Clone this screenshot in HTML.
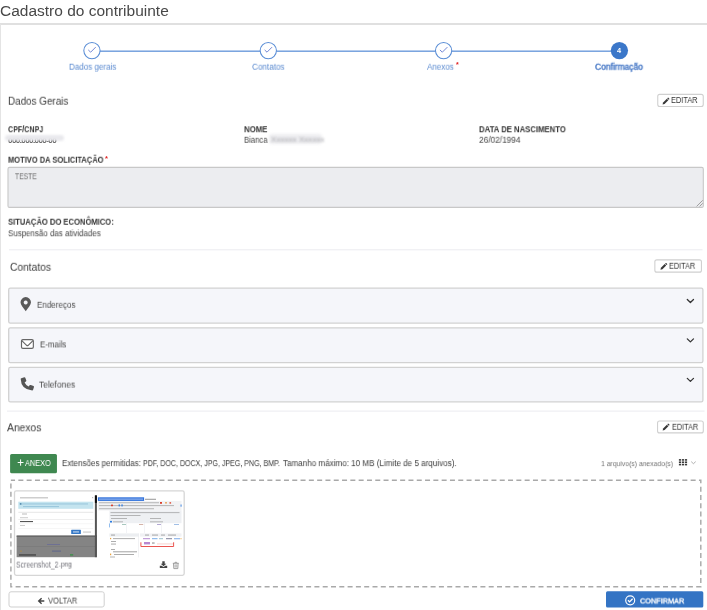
<!DOCTYPE html>
<html lang="pt-BR"><head><meta charset="utf-8"><title>Cadastro do contribuinte</title>
<style>
html,body{margin:0;padding:0;background:#fff}
body{position:relative;width:707px;height:610px;overflow:hidden;font-family:"Liberation Sans",sans-serif}
.t{position:absolute;white-space:pre;display:block;transform-origin:0 0;will-change:transform}
.a{position:absolute;box-sizing:border-box}
svg{position:absolute;overflow:visible}
.card-top{left:0;top:23px;width:707px;height:2px;background:#e0e0e0}
.card-left{left:0;top:24px;width:1px;height:586px;background:#e4e4e4}
.stepline{left:92px;top:50.6px;width:527px;height:1px;background:#5b8ed6}
.sc{width:17.4px;height:17.4px;border-radius:50%;border:1px solid #5b8ed6;background:#fff;top:41.9px}
.sc4{background:#3b77c9;border-color:#3b77c9}
.btn{border:1px solid #cfcfcf;border-radius:2px;background:#fff}
.sep{height:1px;background:#ececf0}
.panel{left:8.2px;width:695.2px;height:35px;border:1px solid #cdcdcd;border-radius:2px;background:#f5f6fa}
.ta{left:7.5px;top:167px;width:696.3px;height:40.8px;border:1px solid #c6c6c6;border-radius:2px;background:#ecedf0}
#s4{-webkit-text-stroke:0.3px #3a6fc2}
#bC{-webkit-text-stroke:0.35px #fff}

#title{left:-0.08px;top:2.20px;font:400 15.2px/1 "Liberation Sans", sans-serif;transform:translate3d(0,0.60px,0) scaleX(1.0198);color:#484848}
#s1{left:68.81px;top:62.00px;font:400 8.6px/1 "Liberation Sans", sans-serif;transform:translate3d(0,0.70px,0) scaleX(0.9355);color:#5a8ad0}
#s2{left:251.61px;top:62.00px;font:400 8.6px/1 "Liberation Sans", sans-serif;transform:translate3d(0,0.70px,0) scaleX(0.9467);color:#5a8ad0}
#s3{left:426.51px;top:62.00px;font:400 8.6px/1 "Liberation Sans", sans-serif;transform:translate3d(0,0.70px,0) scaleX(0.9338);color:#5a8ad0}
#s4{left:595.31px;top:62.00px;font:400 8.6px/1 "Liberation Sans", sans-serif;transform:translate3d(0,0.70px,0) scaleX(0.9827);color:#3a6fc2}
#h1{left:8.02px;top:94.95px;font:400 10.7px/1 "Liberation Sans", sans-serif;transform:translate3d(0,0.70px,0) scaleX(0.9238);color:#3a3a3a}
#l1{left:8.12px;top:125.05px;font:700 8.5px/1 "Liberation Sans", sans-serif;transform:translate3d(0,0.20px,0) scaleX(0.8387);color:#333}
#l2{left:244.02px;top:125.05px;font:700 8.5px/1 "Liberation Sans", sans-serif;transform:translate3d(0,0.20px,0) scaleX(0.9202);color:#333}
#l3{left:478.82px;top:125.05px;font:700 8.5px/1 "Liberation Sans", sans-serif;transform:translate3d(0,0.20px,0) scaleX(0.9081);color:#333}
#v2{left:244.02px;top:135.05px;font:400 8.5px/1 "Liberation Sans", sans-serif;transform:translate3d(0,0.80px,0) scaleX(0.9063);color:#444}
#v3{left:478.82px;top:135.05px;font:400 8.5px/1 "Liberation Sans", sans-serif;transform:translate3d(0,0.80px,0) scaleX(0.9769);color:#444}
#l4{left:7.62px;top:155.05px;font:700 8.5px/1 "Liberation Sans", sans-serif;transform:translate3d(0,0.70px,0) scaleX(0.8828);color:#333}
#ta{left:14.92px;top:172.05px;font:400 8.5px/1 "Liberation Sans", sans-serif;transform:translate3d(0,0.20px,0) scaleX(0.7942);color:#707070}
#l5{left:7.62px;top:217.05px;font:700 8.5px/1 "Liberation Sans", sans-serif;transform:translate3d(0,0.70px,0) scaleX(0.8958);color:#333}
#v5{left:7.62px;top:229.05px;font:400 8.5px/1 "Liberation Sans", sans-serif;transform:translate3d(0,0.20px,0) scaleX(0.9347);color:#444}
#h2{left:10.02px;top:260.95px;font:400 10.7px/1 "Liberation Sans", sans-serif;transform:translate3d(0,0.80px,0) scaleX(0.9575);color:#3a3a3a}
#a1{left:36.52px;top:300.05px;font:400 8.5px/1 "Liberation Sans", sans-serif;transform:translate3d(0,0.80px,0) scaleX(0.9440);color:#484848}
#a2{left:39.62px;top:340.05px;font:400 8.5px/1 "Liberation Sans", sans-serif;transform:translate3d(0,0.40px,0) scaleX(0.9267);color:#484848}
#a3{left:39.32px;top:380.05px;font:400 8.5px/1 "Liberation Sans", sans-serif;transform:translate3d(0,0.60px,0) scaleX(0.9911);color:#484848}
#h3{left:6.92px;top:421.95px;font:400 10.7px/1 "Liberation Sans", sans-serif;transform:translate3d(0,0.30px,0) scaleX(0.9665);color:#3a3a3a}
#bA{left:24.61px;top:459.00px;font:400 8.6px/1 "Liberation Sans", sans-serif;transform:translate3d(0,0.00px,0) scaleX(0.8531);color:#fff}
#ext{left:61.52px;top:459.05px;font:400 8.5px/1 "Liberation Sans", sans-serif;transform:translate3d(0,0.10px,0) scaleX(0.9431);color:#3a3a3a}
#ext2{left:143.22px;top:459.05px;font:400 8.5px/1 "Liberation Sans", sans-serif;transform:translate3d(0,0.10px,0) scaleX(0.8311);color:#3a3a3a}
#ext3{left:283.22px;top:459.05px;font:400 8.5px/1 "Liberation Sans", sans-serif;transform:translate3d(0,0.10px,0) scaleX(0.9493);color:#3a3a3a}
#cnt{left:601.04px;top:459.80px;font:400 8.0px/1 "Liberation Sans", sans-serif;transform:translate3d(0,0.10px,0) scaleX(0.8525);color:#747474}
#fn1{left:16.33px;top:560.15px;font:400 8.3px/1 "Liberation Sans", sans-serif;transform:translate3d(0,0.60px,0) scaleX(0.8290);color:#77777f}
#fn2{left:59.09px;top:561.40px;font:400 6.8px/1 "Liberation Sans", sans-serif;transform:translate3d(0,0.60px,0) scaleX(0.9530);color:#606068}
#bV{left:47.93px;top:596.15px;font:400 8.3px/1 "Liberation Sans", sans-serif;transform:translate3d(0,0.60px,0) scaleX(0.9149);color:#444}
#bC{left:640.14px;top:596.80px;font:400 8.0px/1 "Liberation Sans", sans-serif;transform:translate3d(0,0.40px,0) scaleX(0.9126);color:#fff}
#e1{left:671.13px;top:96.15px;font:400 8.3px/1 "Liberation Sans", sans-serif;transform:translate3d(0,0.00px,0) scaleX(0.8938);color:#333}
#e2{left:669.33px;top:261.15px;font:400 8.3px/1 "Liberation Sans", sans-serif;transform:translate3d(0,0.80px,0) scaleX(0.8804);color:#333}
#e3{left:671.53px;top:422.15px;font:400 8.3px/1 "Liberation Sans", sans-serif;transform:translate3d(0,0.80px,0) scaleX(0.8804);color:#333}
</style></head><body>
<div class="a card-top"></div>
<div class="a card-left"></div>
<svg style="left:0;top:0" width="707" height="610" viewBox="0 0 707 610">
<rect x="92" y="50.55" width="527" height="1.25" fill="#5b8fd8"/>
<circle cx="91.95" cy="50.55" r="8.15" fill="#fff" stroke="#5b8ed6" stroke-width="1.05"/>
<path d="M88.55 50.2 L90.65 52.2 L95.45 47.4" fill="none" stroke="#6a7fd2" stroke-width="0.95" stroke-linecap="round" stroke-linejoin="round"/>
<circle cx="268.3" cy="50.55" r="8.15" fill="#fff" stroke="#5b8ed6" stroke-width="1.05"/>
<path d="M264.90 50.2 L267.00 52.2 L271.80 47.4" fill="none" stroke="#6a7fd2" stroke-width="0.95" stroke-linecap="round" stroke-linejoin="round"/>
<circle cx="443.6" cy="50.55" r="8.15" fill="#fff" stroke="#5b8ed6" stroke-width="1.05"/>
<path d="M440.20 50.2 L442.30 52.2 L447.10 47.4" fill="none" stroke="#6a7fd2" stroke-width="0.95" stroke-linecap="round" stroke-linejoin="round"/>
<circle cx="619.4" cy="50.55" r="8.65" fill="#3b77c9"/>
</svg>
<span class="t" style="left:617.2px;top:46.6px;font:700 7.4px/1 'Liberation Sans',sans-serif;color:#fff">4</span>
<span class="t" style="left:455.5px;top:61.2px;font:700 7px/1 'Liberation Sans',sans-serif;color:#e02020">*</span>
<span class="t" style="left:105px;top:155.2px;font:700 7.5px/1 'Liberation Sans',sans-serif;color:#e02020">*</span>

<!-- boxes -->
<svg style="left:0;top:0" width="707" height="610" viewBox="0 0 707 610">
<rect x="657.75" y="94.35" width="45.50" height="12.20" rx="2" fill="#fff" stroke="#d0d0d0" stroke-width="1.1"/>
<rect x="654.85" y="259.85" width="46.60" height="12.30" rx="2" fill="#fff" stroke="#d0d0d0" stroke-width="1.1"/>
<rect x="657.55" y="420.95" width="45.75" height="11.95" rx="2" fill="#fff" stroke="#d0d0d0" stroke-width="1.1"/>
<rect x="8.00" y="167.40" width="695.30" height="40.00" rx="1.5" fill="#ecedf0" stroke="#c8c8c8" stroke-width="1.1"/>
<rect x="9.00" y="249.30" width="693.50" height="1.00" rx="0" fill="#ececf0"/>
<rect x="7.00" y="410.60" width="697.50" height="1.00" rx="0" fill="#ececf0"/>
<rect x="8.70" y="288.10" width="694.20" height="35.00" rx="1.6" fill="#f5f6fa" stroke="#d2d2d2" stroke-width="1.3"/>
<rect x="8.70" y="327.80" width="694.20" height="34.90" rx="1.6" fill="#f5f6fa" stroke="#d2d2d2" stroke-width="1.3"/>
<rect x="8.70" y="367.40" width="694.20" height="34.40" rx="1.6" fill="#f5f6fa" stroke="#d2d2d2" stroke-width="1.3"/>
<rect x="10.10" y="454.10" width="46.85" height="19.25" rx="1.5" fill="#3f8850"/>
<rect x="10.9" y="480.2" width="689.9" height="106.45" fill="none" stroke="#a9a9a9" stroke-width="1.45" stroke-dasharray="5 3.3" stroke-dashoffset="0.85"/>
<rect x="14.50" y="490.95" width="169.70" height="84.40" rx="1.8" fill="#fff" stroke="#d6d6d6" stroke-width="1.3"/>
<rect x="9.00" y="591.80" width="95.20" height="15.20" rx="2" fill="#fff" stroke="#cfcfcf" stroke-width="1.0"/>
<rect x="606.00" y="591.20" width="97.30" height="16.30" rx="1.5" fill="#3474c4"/>
</svg>
<!-- icons -->
<svg style="left:0;top:0" width="707" height="610" viewBox="0 0 707 610">
 <!-- pencils -->
 <g id="pen1" fill="#383838" transform="translate(665.75,101.3) rotate(-45)">
  <path d="M-4.5 0 L-2.7 -1.05 H2.6 V1.05 H-2.7 Z"/>
  <rect x="3.1" y="-1.05" width="1.3" height="2.1" rx="0.4"/>
 </g>
 <use href="#pen1" transform="translate(-2.15,165.3)"/>
 <use href="#pen1" transform="translate(0.05,325.95)"/>
 <path d="M696.6 206.4 L702.7 200.3 M699.6 206.4 L702.7 203.3" stroke="#8c8c8c" stroke-width="0.8" fill="none"/>
 <!-- map marker -->
 <path fill="#5a5a5a" fill-rule="evenodd" d="M25.75 297.1 a5.25 5.25 0 0 1 5.25 5.25 c0 2.6 -2.9 5.6 -5.25 8.9 c-2.35 -3.3 -5.25 -6.3 -5.25 -8.9 a5.25 5.25 0 0 1 5.25 -5.25 Z M25.7 300.6 a2 2 0 1 0 0.001 0 Z"/>
 <!-- envelope -->
 <g fill="none" stroke="#666" stroke-width="1.15" stroke-linejoin="round">
  <rect x="21.5" y="339.65" width="11.85" height="8.75" rx="1.4" fill="#fff"/>
  <path d="M21.8 340.6 L26.6 345.3 Q27.4 346 28.2 345.3 L33.0 340.6"/>
 </g>
 <!-- phone -->
 <path fill="#555" transform="translate(20.7,377.1)" d="M0.6 1.2 L3.6 0.1 Q4.4 0 4.6 0.7 L5.6 3.4 Q5.8 4.1 5.2 4.5 L3.9 5.5 Q5.2 8.3 7.9 9.5 L8.9 8.2 Q9.4 7.6 10.1 7.9 L12.8 8.9 Q13.5 9.2 13.3 10 L12.4 12.7 Q12.2 13.3 11.5 13.3 Q0.4 12.6 0 1.9 Q0 1.4 0.6 1.2 Z"/>
 <!-- chevrons -->
 <g fill="none" stroke="#333" stroke-width="1.3" stroke-linecap="round" stroke-linejoin="round">
  <path d="M687.3 299.5 L690.4 302.5 L693.5 299.5"/>
  <path d="M687.3 338.9 L690.4 341.9 L693.5 338.9"/>
  <path d="M687.3 378.4 L690.4 381.4 L693.5 378.4"/>
 </g>
 <path d="M691.5 461.9 L693.45 463.7 L695.4 461.9" fill="none" stroke="#9a9a9a" stroke-width="0.8" stroke-linecap="round"/>
 <!-- grid -->
 <g fill="#3a3a3a">
  <rect x="678.9" y="459.1" width="2.2" height="1.6"/><rect x="681.9" y="459.1" width="2.2" height="1.6"/><rect x="684.9" y="459.1" width="2.2" height="1.6"/>
  <rect x="678.9" y="461.45" width="2.2" height="1.6"/><rect x="681.9" y="461.45" width="2.2" height="1.6"/><rect x="684.9" y="461.45" width="2.2" height="1.6"/>
  <rect x="678.9" y="463.8" width="2.2" height="1.6"/><rect x="681.9" y="463.8" width="2.2" height="1.6"/><rect x="684.9" y="463.8" width="2.2" height="1.6"/>
 </g>
 <!-- plus -->
 <path d="M17.7 462.5 H23.5 M20.6 459.4 V465.7" stroke="#fff" stroke-width="1" fill="none"/>
 <!-- download -->
 <g fill="#444">
  <path d="M162.3 561.2 H164.7 V563.7 H166.3 L163.5 566.3 L160.7 563.7 H162.3 Z"/>
  <path d="M159.8 565.7 H161.6 L163.5 567 L165.4 565.7 H167.2 V567.9 H159.8 Z"/>
 </g>
 <!-- trash -->
 <g fill="none" stroke="#8a8a8a" stroke-width="0.8">
  <path d="M172.8 563.3 H178.8 M174.6 563.2 L175 562.3 H176.6 L177 563.2"/>
  <path d="M173.5 563.4 L173.8 568.6 H177.8 L178.1 563.4"/>
  <path d="M174.9 564.4 V567.6 M175.8 564.4 V567.6 M176.7 564.4 V567.6" stroke-width="0.5"/>
 </g>
 <!-- arrow left -->
 <path d="M44.3 601 H39 M41.6 598.2 L38.7 601 L41.6 603.8" fill="none" stroke="#444" stroke-width="1.4" stroke-linejoin="miter"/>
 <!-- check circle -->
 <circle cx="630.2" cy="600.3" r="4.5" fill="none" stroke="#fff" stroke-width="1.15"/>
 <path d="M628 600.3 L629.6 601.9 L632.6 598.7" fill="none" stroke="#fff" stroke-width="1.3"/>
</svg>
<!-- thumbnail preview (drawn) -->
<svg style="left:0;top:0" width="707" height="610" viewBox="0 0 707 610">
 <defs><filter id="b3" x="-5%" y="-5%" width="110%" height="110%"><feGaussianBlur stdDeviation="0.35"/></filter></defs>
 <g filter="url(#b3)">
  <!-- left: dialog over grey page -->
  <rect x="16.6" y="535.6" width="80.3" height="21.6" fill="#848484"/>
  <rect x="16.6" y="535.6" width="80.3" height="1.1" fill="#5c5c5c"/>
  <rect x="17" y="546.2" width="78" height="0.6" fill="#777"/>
  <rect x="94.9" y="495.4" width="2" height="61.8" fill="#555"/>
  <rect x="94.9" y="495.4" width="2" height="7.5" fill="#111"/>
  <rect x="18.3" y="501.7" width="75" height="7.1" fill="#c4e4ef"/>
  <g fill="#6aa6c8" opacity="0.75">
   <rect x="20" y="503.4" width="68" height="1.1" opacity="0.6"/><rect x="23" y="506" width="36" height="1.1" opacity="0.6"/>
   <rect x="19.8" y="503.1" width="1.6" height="1.6" fill="#2d6d96"/>
  </g>
  <rect x="20" y="497.2" width="28" height="1.2" fill="#aaa" opacity="0.7"/>
  <rect x="92" y="497" width="1.2" height="1.2" fill="#aaa" opacity="0.7"/>
  <rect x="18.3" y="511.9" width="75" height="0.5" fill="#ccc"/>
  <rect x="18.3" y="519.2" width="75" height="0.5" fill="#ddd"/>
  <rect x="18.3" y="523.7" width="75" height="0.4" fill="#e8e8e8"/>
  <rect x="18.3" y="528.6" width="75" height="0.4" fill="#e8e8e8"/>
  <rect x="22" y="513.5" width="5" height="1" fill="#bbb"/>
  <rect x="20" y="517.2" width="8" height="1" fill="#ccc"/>
  <rect x="20" y="521" width="13" height="1.1" fill="#555"/>
  <rect x="20" y="525" width="5" height="1" fill="#ccc"/>
  <rect x="71.2" y="529.7" width="9.7" height="4.3" rx="0.5" fill="#3578c6"/>
  <rect x="73" y="531.5" width="6" height="0.9" fill="#fff" opacity="0.9"/>
  <rect x="83" y="531.6" width="8" height="0.9" fill="#bbb"/>
  <rect x="47" y="544" width="13" height="0.9" fill="#66699a" opacity="0.8"/>
  <rect x="52" y="550.6" width="9" height="1" fill="#55608f" opacity="0.8"/>
  <rect x="20" y="550.6" width="2" height="1" fill="#a98b4a"/>
  <rect x="19" y="554.3" width="17" height="1.3" fill="#333" opacity="0.8"/>
  <rect x="70" y="554.2" width="3.2" height="1.4" fill="#3f8f4a"/>
  <!-- right: app window -->
  <rect x="97.9" y="500.9" width="83.6" height="9.6" fill="#f1f2f4"/>
  <rect x="109.4" y="510.5" width="72.1" height="12.7" fill="#eef0f3"/>
  <rect x="97.9" y="497.3" width="46.2" height="3.6" fill="#2d6fdb"/>
  <rect x="99" y="498.6" width="44" height="1" fill="#fff" opacity="0.55"/>
  <rect x="145" y="498.8" width="11" height="0.9" fill="#555" opacity="0.7"/>
  <g fill="#777" opacity="0.55">
   <rect x="99" y="502.3" width="60" height="0.9"/><rect x="99" y="505.2" width="75" height="0.9"/><rect x="99" y="508.3" width="55" height="0.9"/>
   <rect x="110.5" y="512.2" width="69" height="0.9"/><rect x="110.5" y="515" width="30" height="0.9"/>
   <rect x="111" y="518" width="16" height="0.9"/><rect x="150" y="518" width="11" height="0.9"/>
   <rect x="113" y="521.4" width="10" height="0.9"/><rect x="150" y="521.4" width="13" height="0.9"/>
  </g>
  <rect x="110" y="520.9" width="2" height="1.6" fill="#2f7de0"/>
  <rect x="111" y="504.6" width="2" height="1.6" fill="#d9412f"/><rect x="118.6" y="504.4" width="1.3" height="2" fill="#2f7de0"/><rect x="121.4" y="504.4" width="1.3" height="2" fill="#2f7de0"/>
  <rect x="160" y="502" width="2" height="1.8" fill="#d9412f"/><rect x="169.5" y="502" width="1.6" height="1.8" fill="#e06a5a"/><rect x="165" y="502" width="2" height="1.6" fill="#e8b070"/>
  <rect x="180.6" y="504.5" width="0.9" height="2.2" fill="#2f7de0"/>
  <rect x="109.3" y="523.4" width="0.6" height="4" fill="#4a90e2"/>
  <g fill="#e4e7ec"><rect x="126.3" y="523.2" width="0.5" height="10"/><rect x="144" y="523.2" width="0.5" height="10"/><rect x="161.5" y="523.2" width="0.5" height="10"/></g>
  <g opacity="0.7"><rect x="122" y="524.1" width="4" height="0.9" fill="#7a9"/><rect x="139" y="524.1" width="4.2" height="0.9" fill="#b87"/><rect x="157" y="524.1" width="4" height="0.9" fill="#87b"/><rect x="174" y="524.1" width="5" height="0.9" fill="#6a9bd8"/></g>
  <rect x="109.4" y="533.4" width="29.2" height="3.2" fill="#eceef1"/>
  <rect x="140" y="533.4" width="41.5" height="3.2" fill="#f0f1f4"/>
  <rect x="138.4" y="533.4" width="0.5" height="24" fill="#e3e5e9"/>
  <g fill="#666" opacity="0.6">
   <rect x="111" y="534.6" width="4" height="0.9"/><rect x="145" y="534.6" width="4" height="0.9"/><rect x="152" y="534.6" width="6" height="0.9"/><rect x="161" y="534.6" width="4" height="0.9"/><rect x="168" y="534.6" width="8" height="0.9"/>
   <rect x="113" y="538.2" width="22" height="0.9"/><rect x="111" y="541" width="5" height="0.9"/><rect x="111" y="543.6" width="5" height="0.9"/>
   <rect x="111" y="549" width="4" height="0.9"/><rect x="113" y="551.3" width="24" height="1"/><rect x="114" y="554" width="20" height="0.9"/><rect x="110" y="556.6" width="5" height="0.8"/>
  </g>
  <g fill="#e9a23a"><rect x="110" y="537.9" width="1.2" height="1.3"/><rect x="110" y="553.6" width="1.2" height="1.6"/></g>
  <g opacity="0.75"><rect x="143" y="538.2" width="7" height="1" fill="#9a5fc0"/><rect x="152" y="538.2" width="5.5" height="1" fill="#4a90e2"/><rect x="159" y="538.2" width="4" height="1" fill="#7ab"/><rect x="166" y="538.2" width="6" height="1" fill="#557"/><rect x="174" y="538" width="6" height="1.3" fill="#7aa7e6"/><rect x="180.5" y="538" width="1" height="1.3" fill="#e9a23a"/></g>
  <rect x="144" y="542" width="6" height="2.4" fill="#a86cc4" opacity="0.8"/>
  <rect x="152" y="542.3" width="2.6" height="1.5" fill="#777" opacity="0.6"/>
  <rect x="157" y="543.6" width="16" height="0.7" fill="#f2a19b" opacity="0.7"/>
  <path d="M140.9 542.3 V546.5 H173.6 V542.3" fill="none" stroke="#e8413c" stroke-width="0.9"/>
 </g>
</svg>
<!-- obfuscated (blurred) values -->
<span class="t" style="left:8px;top:136.75px;font:700 8.1px/1 'Liberation Sans',sans-serif;color:#3a3a3a;letter-spacing:-0.62px;filter:blur(0.45px)">000.000.000-00</span>
<div class="a" style="left:5px;top:135.2px;width:59px;height:5.4px;background:rgba(232,232,236,0.97);filter:blur(0.9px);border-radius:3px"></div>
<div class="a" style="left:268.5px;top:134px;width:53.5px;height:10px;background:#ededf0;filter:blur(1.4px);border-radius:3px"></div>
<span class="t" style="left:271px;top:136px;font:400 8px/1 'Liberation Sans',sans-serif;color:#8a8a90;letter-spacing:0.05px;filter:blur(1px);opacity:0.7">Xxxxxx Xxxxxx</span>

<span class="t" id="title">Cadastro do contribuinte</span>
<span class="t" id="s1">Dados gerais</span>
<span class="t" id="s2">Contatos</span>
<span class="t" id="s3">Anexos</span>
<span class="t" id="s4">Confirmação</span>
<span class="t" id="h1">Dados Gerais</span>
<span class="t" id="l1">CPF/CNPJ</span>
<span class="t" id="l2">NOME</span>
<span class="t" id="l3">DATA DE NASCIMENTO</span>
<span class="t" id="v2">Bianca</span>
<span class="t" id="v3">26/02/1994</span>
<span class="t" id="l4">MOTIVO DA SOLICITAÇÃO</span>
<span class="t" id="ta">TESTE</span>
<span class="t" id="l5">SITUAÇÃO DO ECONÔMICO:</span>
<span class="t" id="v5">Suspensão das atividades</span>
<span class="t" id="h2">Contatos</span>
<span class="t" id="a1">Endereços</span>
<span class="t" id="a2">E-mails</span>
<span class="t" id="a3">Telefones</span>
<span class="t" id="h3">Anexos</span>
<span class="t" id="bA">ANEXO</span>
<span class="t" id="ext">Extensões permitidas:</span>
<span class="t" id="ext2">PDF, DOC, DOCX, JPG, JPEG, PNG, BMP.</span>
<span class="t" id="ext3">Tamanho máximo: 10 MB (Limite de 5 arquivos).</span>
<span class="t" id="cnt">1 arquivo(s) anexado(s)</span>
<span class="t" id="fn1">Screenshot_2</span>
<span class="t" id="fn2">.png</span>
<span class="t" id="bV">VOLTAR</span>
<span class="t" id="bC">CONFIRMAR</span>
<span class="t" id="e1">EDITAR</span>
<span class="t" id="e2">EDITAR</span>
<span class="t" id="e3">EDITAR</span>
</body></html>
